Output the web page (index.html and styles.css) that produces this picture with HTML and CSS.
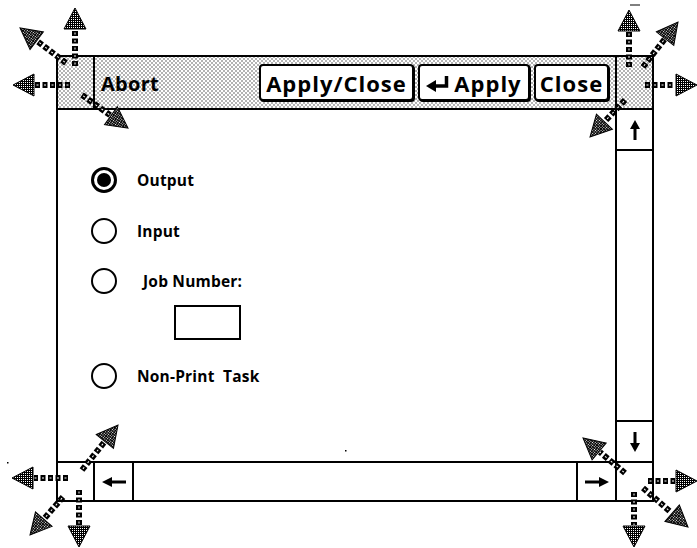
FILE: index.html
```
<!DOCTYPE html>
<html lang="en">
<head>
    <meta charset="UTF-8">
    <meta name="viewport" content="width=device-width, initial-scale=1.0">
    <title>Abort</title>
    <link rel="stylesheet" href="styles.css">
</head>
<body>
    <div class="page">
        <div class="window">
            <div class="titlebar">
                <div class="corner corner-left"></div>
                <div class="title-main">
                    <span class="abort">Abort</span>
                    <div class="buttons">
                        <button class="btn btn-apply-close">Apply/Close</button>
                        <button class="btn btn-apply">
                            <svg class="enter-icon" width="24" height="16" viewBox="0 0 24 16">
                                <path d="M20.5 0 V10 H8" fill="none" stroke="#000" stroke-width="3.5"/>
                                <polygon points="0,10 10,4 10,16" fill="#000"/>
                            </svg>
                            Apply
                        </button>
                        <button class="btn btn-close">Close</button>
                    </div>
                </div>
                <div class="corner corner-right"></div>
            </div>

            <div class="middle">
                <div class="content">
                    <label class="option">
                        <span class="radio checked"></span>
                        <span class="label">Output</span>
                    </label>
                    <label class="option">
                        <span class="radio"></span>
                        <span class="label">Input</span>
                    </label>
                    <label class="option">
                        <span class="radio"></span>
                        <span class="label label-job">Job Number:</span>
                    </label>
                    <div class="job-field"></div>
                    <label class="option option-last">
                        <span class="radio"></span>
                        <span class="label">Non-Print&nbsp; Task</span>
                    </label>
                </div>
                <div class="vscroll">
                    <div class="scroll-cell cell-up">
                        <svg width="10" height="20" viewBox="0 0 10 20"><path d="M5 0 L10 9 H6.5 V20 H3.5 V9 H0 Z" fill="#000"/></svg>
                    </div>
                    <div class="scroll-track"></div>
                    <div class="scroll-cell cell-down">
                        <svg width="10" height="20" viewBox="0 0 10 20"><path d="M5 20 L10 11 H6.5 V0 H3.5 V11 H0 Z" fill="#000"/></svg>
                    </div>
                </div>
            </div>

            <div class="bottombar">
                <div class="corner corner-left"></div>
                <div class="scroll-cell cell-left">
                    <svg width="24" height="10" viewBox="0 0 24 10"><path d="M0 5 L10 0 V3.5 H24 V6.5 H10 V10 Z" fill="#000"/></svg>
                </div>
                <div class="scroll-track"></div>
                <div class="scroll-cell cell-right">
                    <svg width="24" height="10" viewBox="0 0 24 10"><path d="M24 5 L14 0 V3.5 H0 V6.5 H14 V10 Z" fill="#000"/></svg>
                </div>
                <div class="corner corner-right"></div>
            </div>
        </div>

        <svg id="resizeArrows" class="resize-arrows" width="697" height="548" viewBox="0 0 697 548">
            <defs>
                <pattern id="dots" width="2" height="2" patternUnits="userSpaceOnUse">
                    <rect width="2" height="2" fill="#000"/>
                    <rect width="1" height="1" fill="#fff"/>
                </pattern>
            </defs>
            <line x1="630" y1="5" x2="640" y2="5" stroke="#000" stroke-width="1"/>
            <rect x="7" y="462" width="1.5" height="1.5" fill="#000"/>
            <rect x="345" y="450" width="1.5" height="1.5" fill="#000"/>
        </svg>
    </div>

    <script>
        // resize handles: [startX, startY, tipX, tipY]
        const arrows = [
            [75, 66, 75, 8], [70, 85, 13, 85], [66, 63, 20, 28], [82, 95, 128, 128],
            [629, 67, 629, 10], [645, 85, 697, 85], [643, 67, 678, 22], [625, 100, 590, 137],
            [68, 478, 12, 478], [79, 490, 79, 547], [82, 470, 118, 425], [63, 497, 30, 535],
            [648, 481, 697, 481], [634, 492, 634, 547], [625, 473, 583, 438], [643, 488, 688, 527]
        ];

        const svg = document.getElementById('resizeArrows');
        const ns = 'http://www.w3.org/2000/svg';

        function make(tag, attrs) {
            const el = document.createElementNS(ns, tag);
            for (const k in attrs) el.setAttribute(k, attrs[k]);
            return el;
        }

        arrows.forEach(([sx, sy, tx, ty]) => {
            const len = Math.hypot(tx - sx, ty - sy);
            const angle = Math.atan2(ty - sy, tx - sx) * 180 / Math.PI;
            const head = 21;
            const shaft = len - head;

            const g = make('g', { transform: `translate(${sx},${sy}) rotate(${angle})` });
            g.appendChild(make('line', { x1: 0, y1: 0, x2: shaft - 1, y2: 0, stroke: '#000', 'stroke-width': 6, 'stroke-dasharray': '5 2.5' }));
            g.appendChild(make('line', { x1: 1.5, y1: 0, x2: shaft - 1, y2: 0, stroke: '#fff', 'stroke-width': 1, 'stroke-dasharray': '2 5.5' }));
            g.appendChild(make('polygon', { points: `${shaft},-11 ${len},0 ${shaft},11`, fill: 'url(#dots)', stroke: '#000', 'stroke-width': 1 }));
            svg.appendChild(g);
        });
    </script>
</body>
</html>
```

FILE: styles.css
```
body {
    margin: 0;
    background-color: #fff;
    font-family: "Open Sans", "DejaVu Sans", sans-serif;
    color: #000;
}
.page {
    position: relative;
    width: 697px;
    height: 548px;
    overflow: hidden;
}
.window {
    margin: 55px 0 0 56px;
    width: 598px;
    height: 447px;
    box-sizing: border-box;
    border: 2px solid #000;
    display: grid;
    grid-template-rows: 53px 1fr 39px;
}
.titlebar {
    display: grid;
    grid-template-columns: 37px 1fr 37px;
    border-bottom: 2px solid #000;
    background-color: #fff;
    background-image:
        radial-gradient(circle, #333 0.55px, transparent 0.8px),
        radial-gradient(circle, #333 0.55px, transparent 0.8px);
    background-size: 4px 4px;
    background-position: 0 0, 2px 2px;
}
.corner-left {
    border-right: 2px solid #000;
}
.corner-right {
    border-left: 2px solid #000;
}
.bottombar .corner {
    background: #fff;
}
.title-main {
    display: flex;
    align-items: center;
    justify-content: space-between;
    padding: 0 6px;
}
.abort {
    font-size: 20px;
    font-weight: bold;
    letter-spacing: 0.3px;
    margin-top: 2px;
}
.buttons {
    display: flex;
    gap: 4px;
}
.btn {
    height: 37px;
    box-sizing: border-box;
    border: 2px solid #000;
    border-radius: 4px;
    box-shadow: 1px 1px 0 #000;
    background: #fff;
    font-family: inherit;
    font-size: 22px;
    font-weight: bold;
    letter-spacing: 1px;
    padding: 0;
    display: flex;
    align-items: center;
    justify-content: center;
    gap: 4px;
    color: #000;
}
.btn-apply-close {
    width: 155px;
}
.btn-apply {
    width: 112px;
}
.btn-close {
    width: 75px;
}
.enter-icon {
    margin-top: 2px;
}
.middle {
    display: grid;
    grid-template-columns: 1fr 37px;
}
.content {
    display: flex;
    flex-direction: column;
    padding: 57px 0 0 33px;
}
.option {
    display: flex;
    align-items: center;
    height: 26px;
    margin-bottom: 25px;
}
.option:nth-child(2) {
    margin-bottom: 24px;
}
.option:nth-child(3) {
    margin-bottom: 11px;
}
.radio {
    width: 26px;
    height: 26px;
    box-sizing: border-box;
    border: 2px solid #000;
    border-radius: 50%;
    display: flex;
    align-items: center;
    justify-content: center;
    flex-shrink: 0;
}
.radio.checked {
    border-width: 3px;
}
.radio.checked::after {
    content: "";
    width: 14px;
    height: 14px;
    border-radius: 50%;
    background: #000;
}
.label {
    margin-left: 20px;
    font-size: 15.5px;
    font-weight: bold;
    letter-spacing: 0.2px;
}
.label-job {
    margin-left: 26px;
}
.job-field {
    width: 67px;
    height: 35px;
    box-sizing: border-box;
    border: 2px solid #000;
    margin: 0 0 23px 83px;
}
.vscroll {
    display: grid;
    grid-template-rows: 41px 1fr 41px;
    border-left: 2px solid #000;
}
.scroll-cell {
    display: flex;
    align-items: center;
    justify-content: center;
}
.cell-up {
    border-bottom: 2px solid #000;
}
.cell-down {
    border-top: 2px solid #000;
}
.bottombar {
    display: grid;
    grid-template-columns: 37px 39px 1fr 39px 37px;
    border-top: 2px solid #000;
}
.cell-left {
    border-right: 2px solid #000;
}
.cell-right {
    border-left: 2px solid #000;
}
.resize-arrows {
    position: absolute;
    left: 0;
    top: 0;
    pointer-events: none;
}
```
